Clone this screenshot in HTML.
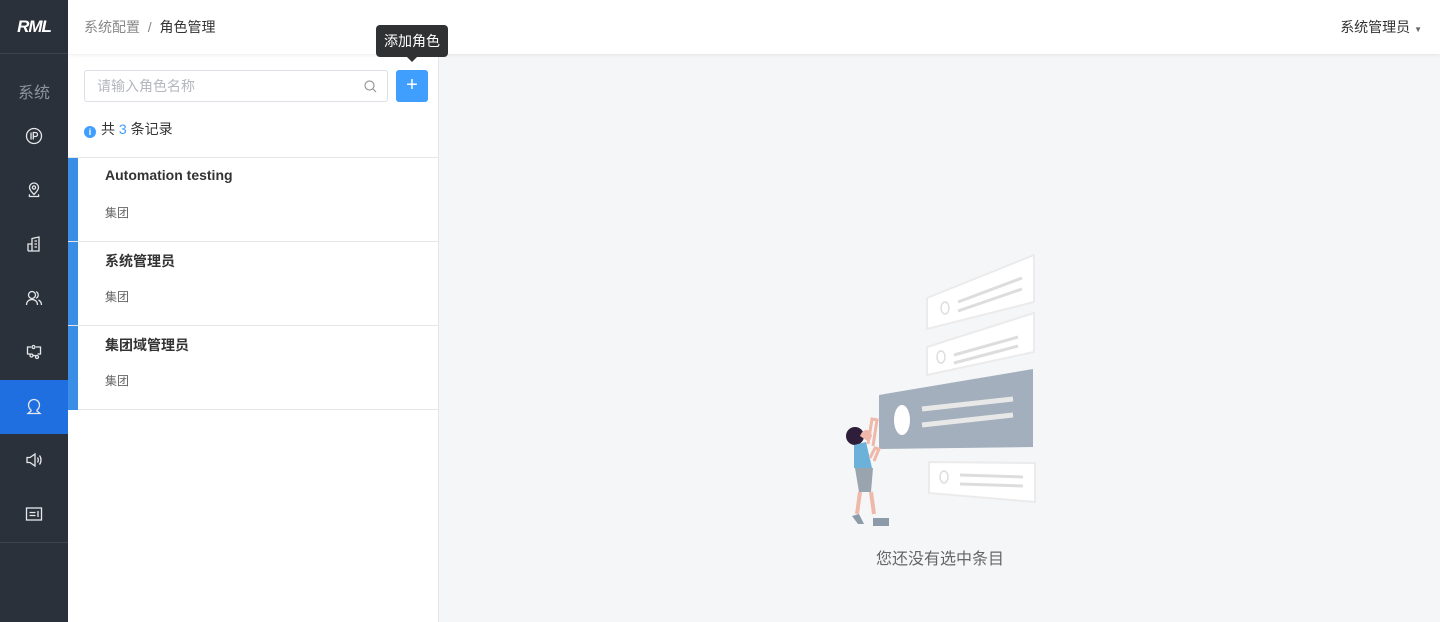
<!DOCTYPE html>
<html><head><meta charset="utf-8"><style>
*{margin:0;padding:0;box-sizing:border-box}
body{width:1440px;height:622px;overflow:hidden;font-family:"Liberation Sans","Noto Sans CJK SC",sans-serif;background:#f5f6f8;position:relative;color:#333}
.side{position:absolute;left:0;top:0;width:68px;height:622px;background:#2b313b}
.logo{height:54px;border-bottom:1px solid #3d444e;color:#fff;font-style:italic;font-weight:bold;font-size:17px;text-align:center;line-height:54px;letter-spacing:-1px}
.sys{color:#8c939c;font-size:16px;text-align:center;margin-top:25px;height:26px}
.ic{position:absolute;left:0;width:68px;height:54px;display:flex;align-items:center;justify-content:center}
.ic svg{width:18px;height:18px;fill:none;stroke:#e6e8eb;stroke-width:1.3}
.top{position:absolute;left:68px;top:0;right:0;height:54px;background:#fff;box-shadow:0 1px 4px rgba(0,0,0,.08);z-index:2}
.bc{position:absolute;left:16px;top:17px;font-size:14px;color:#888}
.bc b{font-weight:normal;color:#333}
.user{position:absolute;right:18px;top:17px;font-size:14px;color:#333}
.left{position:absolute;left:68px;top:54px;width:371px;height:568px;background:#fff;border-right:1px solid #e6e6e6}
.search{position:absolute;left:16px;top:16px;width:304px;height:32px;border:1px solid #dcdfe6;border-radius:3px;font-size:14px;color:#b4b7bd;padding:5px 12px}
.add{position:absolute;left:328px;top:16px;width:32px;height:32px;background:#409eff;border-radius:3px;color:#fff;font-size:20px;text-align:center;line-height:30px;font-weight:300}
.tip{position:absolute;left:376px;top:25px;width:72px;height:32px;background:#303133;color:#fff;border-radius:4px;font-size:14px;line-height:32px;text-align:center;z-index:5}
.tip:after{content:"";position:absolute;left:31px;bottom:-5px;border:5px solid transparent;border-top-color:#303133;border-bottom:0}
.cnt{position:absolute;left:16px;top:65px;font-size:14px;color:#333}
.cnt i{display:inline-block;width:12px;height:12px;border-radius:50%;background:#409eff;vertical-align:-1px;margin-right:5px;color:#fff;font-size:9px;font-style:normal;text-align:center;line-height:12px;font-weight:bold}
.item{position:absolute;left:0;width:370px;height:84px;border-top:1px solid #e6e6e6}
.item:before{content:"";position:absolute;left:0;top:0;width:10px;height:84px;background:#3a8ee6}
.item .t{position:absolute;left:37px;top:9px;font-size:14px;font-weight:bold;color:#333}
.item .s{position:absolute;left:37px;top:46px;font-size:12px;color:#666}
.empty{position:absolute;left:876px;top:545px;font-size:16px;color:#666}
</style></head><body>
<div class="side">
<div class="logo">RML</div>
<div class="sys">系统</div>
<div class="ic" style="top:109px;"><svg viewBox="0 0 18 18"><circle cx="9" cy="9" r="7.5"/><path d="M6 5.5v7M8.3 12.5v-7h2.2a2 2 0 010 4H8.3"/></svg></div>
<div class="ic" style="top:163px;"><svg viewBox="0 0 18 18"><path d="M9 13.5C6 10.5 4.5 8.5 4.5 6.5a4.5 4.5 0 019 0c0 2-1.5 4-4.5 7z"/><circle cx="9" cy="6.5" r="1.6"/><path d="M5 13.5c-1 .5-1 2 0 2h8c1 0 1-1.5 0-2"/></svg></div>
<div class="ic" style="top:217px;"><svg viewBox="0 0 18 18"><path d="M3 16V9h4v7M7 16V3.5l7-1.5v14H3M9.5 6h2.5M9.5 9h2.5M9.5 12h2.5"/></svg></div>
<div class="ic" style="top:271px;"><svg viewBox="0 0 18 18"><circle cx="7" cy="6" r="3.5"/><path d="M1.5 16c0-3.5 2.5-5.5 5.5-5.5s5.5 2 5.5 5.5M11 2.7a3.5 3.5 0 010 6.5M13.5 11c2 1 3 3 3 5"/></svg></div>
<div class="ic" style="top:325px;"><svg viewBox="0 0 18 18"><path d="M6 4H2.5v7h3M11 4h4.5v7h-3"/><circle cx="8.5" cy="4" r="1.5"/><circle cx="6.5" cy="12.5" r="1.5"/><circle cx="12" cy="14" r="1.5"/><path d="M8 12.5h3"/></svg></div>
<div class="ic" style="top:380px;background:#1f6fe0;"><svg viewBox="0 0 18 18"><path d="M6.5 12.5C4.5 11 3.5 9 3.5 7a5.5 5.5 0 0111 0c0 2-1 4-3 5.5M6.5 12.5L3 15.5h12l-3.5-3"/></svg></div>
<div class="ic" style="top:433px;"><svg viewBox="0 0 18 18"><path d="M2 6.5h3l5-3.5v12l-5-3.5H2zM12.5 6.5c1 1.5 1 3.5 0 5M14.5 4.5c2 2.5 2 6.5 0 9"/></svg></div>
<div class="ic" style="top:487px;"><svg viewBox="0 0 18 18"><rect x="1.5" y="3" width="15" height="12"/><path d="M4.5 7.5h6M4.5 10.5h6M13 6v6"/></svg></div>
<div style="position:absolute;left:0;top:542px;width:68px;border-top:1px solid #3d444e"></div>
</div>
<div class="top"><div class="bc">系统配置 &nbsp;/&nbsp; <b>角色管理</b></div><div class="user">系统管理员 <span style="font-size:8px;color:#666">▼</span></div></div>
<div class="tip">添加角色</div>
<div class="left">
<div class="search">请输入角色名称<svg style="position:absolute;right:10px;top:9px" width="13" height="13" viewBox="0 0 13 13" fill="none" stroke="#999" stroke-width="1.2"><circle cx="5.5" cy="5.5" r="4.5"/><path d="M9 9l3 3"/></svg></div>
<div class="add">+</div>
<div class="cnt"><i>i</i>共 <span style="color:#409eff">3</span> 条记录</div>
<div class="item" style="top:103px"><div class="t">Automation testing</div><div class="s">集团</div></div>
<div class="item" style="top:187px"><div class="t">系统管理员</div><div class="s">集团</div></div>
<div class="item" style="top:271px;border-bottom:1px solid #e6e6e6;height:85px"><div class="t">集团域管理员</div><div class="s">集团</div></div>
</div>
<svg style="position:absolute;left:830px;top:250px" width="220" height="290" viewBox="830 250 220 290">
<g fill="#fff" stroke="#ebebeb" stroke-width="2">
<polygon points="927,298 1034,255 1034,302 927,329"/>
<polygon points="927,347 1034,313 1034,352 927,375"/>
<polygon points="929,462 1035,463 1035,502 929,493"/>
</g>
<polygon points="879,395 1033,369 1033,447 879,449" fill="#a3afbd"/>
<g fill="none" stroke="#ddd" stroke-width="3"><ellipse cx="945" cy="308" rx="4" ry="6" stroke-width="1.5"/><path d="M958 302l64-24M958 311l64-22M954 355l64-18M954 363l64-17M960 475l63 2M960 484l63 2"/><ellipse cx="941" cy="357" rx="4" ry="6" stroke-width="1.5"/><ellipse cx="944" cy="477" rx="4" ry="6" stroke-width="1.5"/></g>
<ellipse cx="902" cy="420" rx="8" ry="15" fill="#fff"/>
<path d="M922 409l91-10M922 425l91-10" stroke="#e8e8e8" stroke-width="5"/>
<circle cx="855" cy="436" r="9" fill="#2f1e3a"/>
<path d="M860 436c3-8 10-8 12 0l-3 6z" fill="#f0b8a8"/>
<path d="M854 445l12-3 6 26h-18z" fill="#6cb1d9"/>
<path d="M868 444l4-25 5 1-4 26M870 458l5-10 4 1-5 12" stroke="#f0b8a8" stroke-width="3" fill="none"/>
<path d="M855 468h18l-2 24h-12z" fill="#9aa4ae"/>
<path d="M860 492l-3 22M871 492l3 22" stroke="#f0b8a8" stroke-width="4"/>
<path d="M852 516l6 8h6l-5-10zM873 518h16v8h-16z" fill="#8c9aaa"/>
</svg>
<div class="empty">您还没有选中条目</div>
</body></html>
